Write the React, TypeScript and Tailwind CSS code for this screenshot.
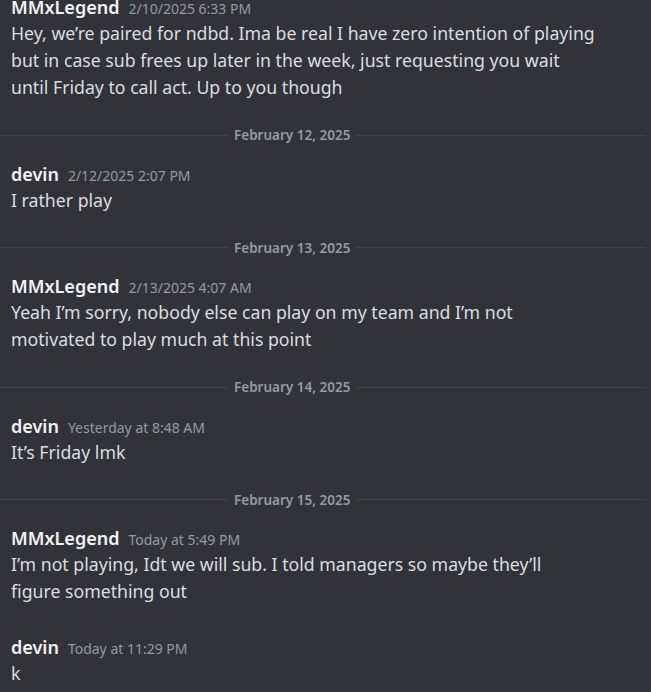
import React from 'react';

type Msg = { kind: 'msg'; author: string; time: string; lines: string[]; gap?: boolean };
type Div = { kind: 'div'; date: string };

const items: (Msg | Div)[] = [
  {
    kind: 'msg',
    author: 'MMxLegend',
    time: '2/10/2025 6:33 PM',
    lines: [
      'Hey, we’re paired for ndbd. Ima be real I have zero intention of playing',
      'but in case sub frees up later in the week, just requesting you wait',
      'until Friday to call act. Up to you though',
    ],
  },
  { kind: 'div', date: 'February 12, 2025' },
  { kind: 'msg', author: 'devin', time: '2/12/2025 2:07 PM', lines: ['I rather play'] },
  { kind: 'div', date: 'February 13, 2025' },
  {
    kind: 'msg',
    author: 'MMxLegend',
    time: '2/13/2025 4:07 AM',
    lines: [
      'Yeah I’m sorry, nobody else can play on my team and I’m not',
      'motivated to play much at this point',
    ],
  },
  { kind: 'div', date: 'February 14, 2025' },
  { kind: 'msg', author: 'devin', time: 'Yesterday at 8:48 AM', lines: ['It’s Friday lmk'] },
  { kind: 'div', date: 'February 15, 2025' },
  {
    kind: 'msg',
    author: 'MMxLegend',
    time: 'Today at 5:49 PM',
    lines: [
      'I’m not playing, Idt we will sub. I told managers so maybe they’ll',
      'figure something out',
    ],
  },
  { kind: 'msg', author: 'devin', time: 'Today at 11:29 PM', lines: ['k'], gap: true },
];

function Message({ m }: { m: Msg }) {
  return (
    <div className={m.gap ? 'pl-[11px] mt-[29px]' : 'pl-[11px]'}>
      <div className="flex items-baseline h-[26px] leading-[26px]">
        <span className="text-[18px] font-semibold text-[#f2f3f5]">{m.author}</span>
        <span className="ml-[9px] text-[14px] text-[#949ba4]">{m.time}</span>
      </div>
      {m.lines.map((l, i) => (
        <div key={i} className="text-[17.7px] leading-[27px] text-[#dbdee1] whitespace-nowrap">
          {l}
        </div>
      ))}
    </div>
  );
}

function Divider({ date }: { date: string }) {
  return (
    <div className="flex items-center h-[14px] mt-[27px] mb-[18.5px] mr-[5px]">
      <div className="w-[228px] h-px bg-[#3f4147]" />
      <span className="px-[6px] text-[13.5px] font-semibold text-[#949ba4] leading-[14px]">{date}</span>
      <div className="flex-1 h-px bg-[#3f4147]" />
    </div>
  );
}

export default function App() {
  return (
    <div
      className="w-[651px] h-[692px] overflow-hidden bg-[#313338]"
      style={{ fontFamily: '"Noto Sans", "Open Sans", sans-serif' }}
    >
      <div className="-mt-[6px]">
        {items.map((it, i) =>
          it.kind === 'msg' ? <Message key={i} m={it} /> : <Divider key={i} date={it.date} />
        )}
      </div>
    </div>
  );
}
